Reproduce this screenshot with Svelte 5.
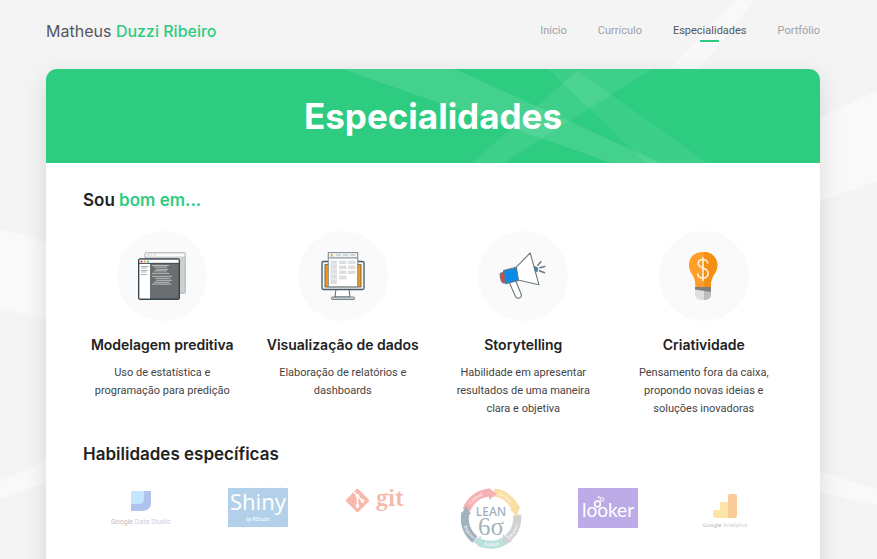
<script>
  const nav = ['Início', 'Currículo', 'Especialidades', 'Portfólio'];
  let active = $state('Especialidades');

  const skills = [
    { icon: 'windows', title: 'Modelagem preditiva', text: 'Uso de estatística e programação para predição' },
    { icon: 'monitor', title: 'Visualização de dados', text: 'Elaboração de relatórios e dashboards' },
    { icon: 'megaphone', title: 'Storytelling', text: 'Habilidade em apresentar resultados de uma maneira clara e objetiva' },
    { icon: 'bulb', title: 'Criatividade', text: 'Pensamento fora da caixa, propondo novas ideias e soluções inovadoras' }
  ];

  const codeLines = [
    [14, 31, 0], [16, 29, 1.6], [18, 30, 3.8], [16, 29, 5.4], [14, 31, 7.8],
    [14, 34, 10.8], [17, 32, 12.8], [18, 34, 14.8], [16, 31, 16.8], [14, 33, 18.6]
  ];
</script>

<svelte:head><title>Especialidades</title></svelte:head>

<div class="page">
  <svg class="beams" viewBox="0 0 877 559" preserveAspectRatio="none" aria-hidden="true">
    <path d="M0 229 60 246V323L0 308ZM0 481 60 455V478L0 499ZM737 0H755L690 80H658ZM877 91 800 126V208L877 181ZM800 466 877 489V505L800 487Z" />
  </svg>

  <header>
    <a class="brand" href="#inicio">Matheus <span>Duzzi Ribeiro</span></a>
    <nav>
      {#each nav as item}
        <a href="#{item}" class:active={active === item} onclick={() => (active = item)}>{item}</a>
      {/each}
    </nav>
  </header>

  <main>
    <div class="banner">
      <svg viewBox="0 0 774 94" preserveAspectRatio="none" aria-hidden="true">
        <path d="M296 0H409L614 94H566Z" opacity=".11" />
        <path d="M426 94 533 0H606L457 94Z" opacity=".08" />
        <path d="M502 0H529L661 94H600Z" opacity=".07" />
      </svg>
      <h1>Especialidades</h1>
    </div>

    <div class="content">
      <h2>Sou <span>bom em...</span></h2>
      <div class="skills">
        {#each skills as skill}
          <article>
            <div class="circle">
              {#if skill.icon === 'windows'}
                <svg viewBox="0 0 48 48">
                  <g opacity=".3">
                    <rect x="7" y=".7" width="40.3" height="40.6" rx="1.5" fill="#6a6e70" stroke="#34444e" stroke-width="1.4" />
                    <path d="M7.700 1.400H46.600V4.500H7.700Z" fill="#fff" />
                    <circle cx="10.500" cy="3" r="1" fill="#f0483e" /><circle cx="13.700" cy="3" r="1" fill="#f59a23" /><circle cx="17" cy="3" r="1" fill="#35c98a" />
                  </g>
                  <rect x=".7" y="6.900" width="40.600" height="40.400" rx="1.500" fill="#6a6e70" stroke="#34444e" stroke-width="1.400" />
                  <path d="M1.400 7.700H40.600V10.900H1.400ZM1.400 11.800H12V46.600H1.400Z" fill="#fff" />
                  <path d="M1.400 11.300H40.600" stroke="#34444e" stroke-width=".8" />
                  <circle cx="3.500" cy="9.500" r="1.100" fill="#f0483e" /><circle cx="6.800" cy="9.500" r="1.100" fill="#f59a23" /><circle cx="10" cy="9.500" r="1.100" fill="#35c98a" />
                  <path d="M3 14.500H11M3 16H9M3 18.500H10M3 20H8M3 22.500H9" stroke="#aaa" stroke-width=".9" />
                  {#each codeLines as [a, b, y]}
                    <path d="M{a} {13.5 + y}H{b}" stroke="#c4c6c7" stroke-width=".9" />
                  {/each}
                </svg>
              {:else if skill.icon === 'monitor'}
                <svg viewBox="0 0 48 48">
                  <path d="M17 37 16 45H31L30 37" fill="#fff" stroke="#596a74" stroke-width="1" />
                  <rect x="3" y="9.500" width="42" height="28" rx="1.500" fill="#f3f5f6" stroke="#455a66" stroke-width="1.300" />
                  <path d="M6 12.500H42V35H6Z" fill="#ff9800" stroke="#455a66" stroke-width=".8" />
                  <path d="M9.300.7H38.700V34.800H9.300Z" fill="#fff" stroke="#89949a" stroke-width="1.200" />
                  <path d="M10 1.500H38V5H10Z" fill="#eef0f1" /><path d="M12 2H13.500V4.500H12Z" fill="#ff9800" />
                  <path d="M17 3H22M24 3H29M31 3H36" stroke="#c5cacd" stroke-width="1.600" />
                  <path d="M10 5.900H38" stroke="#78858c" stroke-width="1.100" />
                  <path d="M11.500 8.500H18V32H11.500ZM20 8.500H27.500V12H20ZM29 8.500H36.500V12H29ZM20 13.500H27.500V17H20ZM29 13.500H36.500V17H29ZM20 18.500H27.500V22H20ZM29 18.500H36.500V22H29ZM20 23.500H27.500V27.500H20Z" fill="#dddfe0" />
                  <path d="M12 12H18M12 17H18M12 22H18M12 27H18" stroke="#edeff0" />
                  <rect x="12.500" y="45" width="23" height="2.500" rx=".7" fill="#c7cfd3" stroke="#596a74" stroke-width=".8" />
                </svg>
              {:else if skill.icon === 'megaphone'}
                <svg viewBox="0 0 48 48" stroke="#6b7981" stroke-width="1.100" stroke-linejoin="round" stroke-linecap="round">
                  <path d="m10.500 31 6 13.500c1.500 3.200 6.800 1.500 5.800-2L16.800 29" fill="#fff" />
                  <path d="M31.200 1 17 15.300 19 28 40 32.800Z" fill="#fff" />
                  <path d="M1.200 21.500 5 20 7 31 3.500 30.600C2 28.500 1 25 1.200 21.500Z" fill="#f13d35" />
                  <path d="M4.500 18.600 17.300 15.200 19.500 28.400 6.500 31.800Z" fill="#078de9" />
                  <path d="M35.200 14.800C39.500 15 39.700 18.500 36.700 20Z" fill="#078de9" />
                  <path d="m38.800 13.300 3.200-3.500M40.800 15.800l5-1.300M40.500 18.800l5 2" fill="none" stroke-width="1.500" />
                </svg>
              {:else}
                <svg viewBox="0 0 48 48">
                  <path d="M23 0C13 0 8.500 7 9 14c.4 7 5 9 6 15.500.4 2.500.2 4 .2 5.500H31c0-1.500-.2-3 .2-5.500C32.400 23 37 21 37.300 14 37.700 7 33 0 23 0Z" fill="#ff9f29" />
                  <path d="M24 0C33 0 37.700 7 37.300 14 37 21 32.400 23 31.200 29.500c-.4 2.500-.2 4-.2 5.500H24Z" fill="#f59016" />
                  <path d="M15 35H31V43C31 46 27.500 48 23 48S15 46 15 43Z" fill="#dedede" />
                  <path d="M24 35H31V43C31 46 28 48 24 48Z" fill="#bdbdbd" />
                  <path d="M15 35H31V40L15 37.500Z" fill="#808080" />
                  <path d="M27.800 11.500C27.500 8.700 25.800 7.500 23 7.500c-3 0-4.800 1.600-4.800 4 0 5.700 9.900 3.200 9.900 9.500 0 3.200-2 5-5.100 5-3.300 0-5.300-1.700-5.300-4.700M23 5V29" fill="none" stroke="#fff1dc" stroke-width="1.600" />
                </svg>
              {/if}
            </div>
            <h3>{skill.title}</h3>
            <p>{skill.text}</p>
          </article>
        {/each}
      </div>

      <h2 class="second">Habilidades específicas</h2>
      <div class="logos">
        <svg viewBox="0 0 60 40" role="img" aria-label="Google Data Studio">
          <path d="M20 3H40V14C40 20 37 23 30 23H20Z" fill="#4269d6" />
          <path d="M20 3H33V10C33 14 31 16 27 16H20Z" fill="#70c0ff" />
          <text x="30" y="36" text-anchor="middle" font-size="7" fill="#888"><tspan fill="#555">Google</tspan> Data Studio</text>
        </svg>
        <svg viewBox="0 0 60 39" role="img" aria-label="Shiny by RStudio">
          <path d="M0 0H60V39H0Z" fill="#428bca" />
          <path d="M0 24 24 0M0 39 39 0M15 39 54 0M31 39 60 10M46 39 60 25" stroke="#4a90cd" stroke-width="2" />
          <g fill="#fff" text-anchor="middle"><text class="noto" x="30" y="22" font-size="22">Shiny</text><text x="30" y="33" font-size="5">by RStudio</text></g>
        </svg>
        <svg viewBox="0 0 60 25" role="img" aria-label="git">
          <rect x="3.800" y="3.800" width="17.400" height="17.400" rx="1.500" transform="rotate(45 12.500 12.500)" fill="#f05133" />
          <path d="m9 4 3.500 4V18M12.500 8l5 5" fill="none" stroke="#fff" stroke-width="1.500" />
          <g fill="#fff"><circle cx="12.500" cy="8" r="1.900" /><circle cx="12.500" cy="18" r="1.900" /><circle cx="17.500" cy="13" r="1.900" /></g>
          <text class="slab" x="45" y="18" text-anchor="middle" font-size="21" fill="#f05133">git</text>
        </svg>
        <svg viewBox="0 0 60 61" role="img" aria-label="Lean 6 sigma">
          <g fill="none" stroke-width="8">
            <path d="M5.500 22A26 26 0 0 1 29 4.500" stroke="#e83e48" />
            <path d="M33 4.600A26 26 0 0 1 55 22" stroke="#f4ad18" />
            <path d="M56 27A26 26 0 0 1 47 50" stroke="#8d8e95" />
            <path d="M45 52A26 26 0 0 1 18 54" stroke="#58b5ac" />
            <path d="M14 51.500A26 26 0 0 1 4.500 25" stroke="#17405a" />
          </g>
          <path d="M28 0 36 6 28 12Z" fill="#e83e48" /><path d="M49 21 59 18 56 29Z" fill="#f4ad18" /><path d="M51 54 42 55 42 46Z" fill="#8d8e95" /><path d="M20 48V60L12 53Z" fill="#58b5ac" /><path d="M0 27 5 18 10 26Z" fill="#17405a" />
          <defs><path id="ring-top" d="M6 30A24 24 0 0 1 54 30" /><path id="ring-bottom" d="M2 30A28 28 0 0 0 58 30" /></defs>
          <g class="serif" font-size="5" fill="#fff"><text><textPath href="#ring-top" startOffset="14">Control</textPath></text><text><textPath href="#ring-top" startOffset="45">Define</textPath></text><text><textPath href="#ring-bottom" startOffset="8">Improve</textPath></text><text><textPath href="#ring-bottom" startOffset="36">Analyze</textPath></text><text><textPath href="#ring-bottom" startOffset="64">Measure</textPath></text></g>
          <g fill="#17405a" text-anchor="middle"><text class="lean" x="30" y="28" font-size="12">LEAN</text><text class="serif" x="30" y="47" font-size="25">6σ</text></g>
        </svg>
        <svg viewBox="0 0 60 40" role="img" aria-label="looker">
          <path d="M0 0H60V40H0Z" fill="#5a2fc2" />
          <text class="lato" x="30" y="29" text-anchor="middle" font-size="19" fill="#fff">looker</text>
          <g fill="none" stroke="#fff"><circle cx="19.500" cy="16" r="2.900" stroke-width="1.500" /><circle cx="24" cy="11.500" r="1.800" /><circle cx="21" cy="9" r="1" stroke-width=".7" /></g>
        </svg>
        <svg viewBox="0 0 60 41" role="img" aria-label="Google Analytics">
          <path d="M19 22H25V15Q25 14 26 14H34V30H20Q18 30 18 27V23Q18 22 19 22Z" fill="#fbc02d" />
          <path d="M33 8Q33 6 35 6H39Q42 6 42 8V27Q42 30 39 30H33Z" fill="#f57c00" />
          <text x="30" y="39" text-anchor="middle" font-size="6" fill="#888"><tspan fill="#555">Google</tspan> Analytics</text>
        </svg>
      </div>
    </div>
  </main>
</div>

<style>
  :global(body) { margin: 0; background: #f4f4f4; }
  .page {
    position: relative;
    box-sizing: border-box;
    min-height: 100vh;
    padding: 0 57px 0 46px;
    overflow: hidden;
    font-family: Roboto, sans-serif;
    color: #444;
  }
  .beams { position: absolute; inset: 0; width: 100%; height: 100vh; fill: #f9f9f9; }
  header {
    position: relative;
    display: flex;
    align-items: center;
    justify-content: space-between;
    min-height: 61px;
    padding-bottom: 8px;
  }
  a { text-decoration: none; }
  .brand { font: 400 16px/20px Inter, sans-serif; color: #54565f; }
  .brand span { font-weight: 500; }
  .brand span, h2 span { color: #2ecc80; }
  nav { display: flex; gap: 31px; }
  nav a { position: relative; font-size: 11px; line-height: 20px; color: #a0a0a4; }
  nav a.active { color: #54565f; }
  nav a.active::after {
    content: '';
    position: absolute;
    left: 50%;
    bottom: -1px;
    width: 19px;
    height: 2px;
    margin-left: -10px;
    background: #2ecc80;
  }
  main {
    position: relative;
    background: #fff;
    border-radius: 11px 11px 0 0;
    box-shadow: 0 8px 24px rgba(0, 0, 0, .12);
  }
  .banner {
    position: relative;
    padding: 27px 20px;
    border-radius: 11px 11px 0 0;
    background: #2ecc80;
    overflow: hidden;
  }
  .banner svg { position: absolute; inset: 0; width: 100%; height: 100%; fill: #fff; }
  h1, h2, h3 { margin: 0; font-family: Inter, sans-serif; }
  h1 { position: relative; font-size: 35px; line-height: 40px; font-weight: 700; color: #fff; text-align: center; }
  .content { padding: 27px 37px 37px; }
  h2 { margin-bottom: 21px; font-size: 17px; line-height: 20px; font-weight: 600; color: #222; }
  h2.second { margin: 26px 0 24px; }
  .skills { display: grid; grid-template-columns: repeat(4, 1fr); gap: 22px; text-align: center; }
  .circle {
    display: grid;
    place-items: center;
    width: 90px;
    height: 90px;
    margin: 0 auto 14px;
    border-radius: 50%;
    background: #fafafa;
  }
  .circle svg { width: 48px; height: 48px; }
  h3 { font-size: 14px; line-height: 20px; font-weight: 600; color: #222; white-space: nowrap; }
  p { margin: 9px 0 0; font-size: 11px; line-height: 18px; }
  .logos { display: grid; grid-template-columns: repeat(6, 1fr); justify-items: center; align-items: start; }
  .logos svg { display: block; width: 60px; opacity: .4; overflow: visible; }
  .noto { font-family: 'Noto Sans', sans-serif; }
  .lato { font-family: Lato, sans-serif; }
  .slab { font-family: 'Noto Serif', 'DejaVu Serif', serif; font-weight: 700; }
  .serif { font-family: 'Liberation Serif', serif; }
  .lean { font-family: 'Open Sans', sans-serif; font-weight: 600; }
  @media (max-width: 700px) {
    .page { padding: 0 16px; }
    header { flex-wrap: wrap; gap: 8px; padding-top: 8px; }
    nav { flex-wrap: wrap; gap: 16px; }
    .skills { grid-template-columns: repeat(2, 1fr); }
    .logos { grid-template-columns: repeat(3, 1fr); row-gap: 24px; }
  }
</style>
